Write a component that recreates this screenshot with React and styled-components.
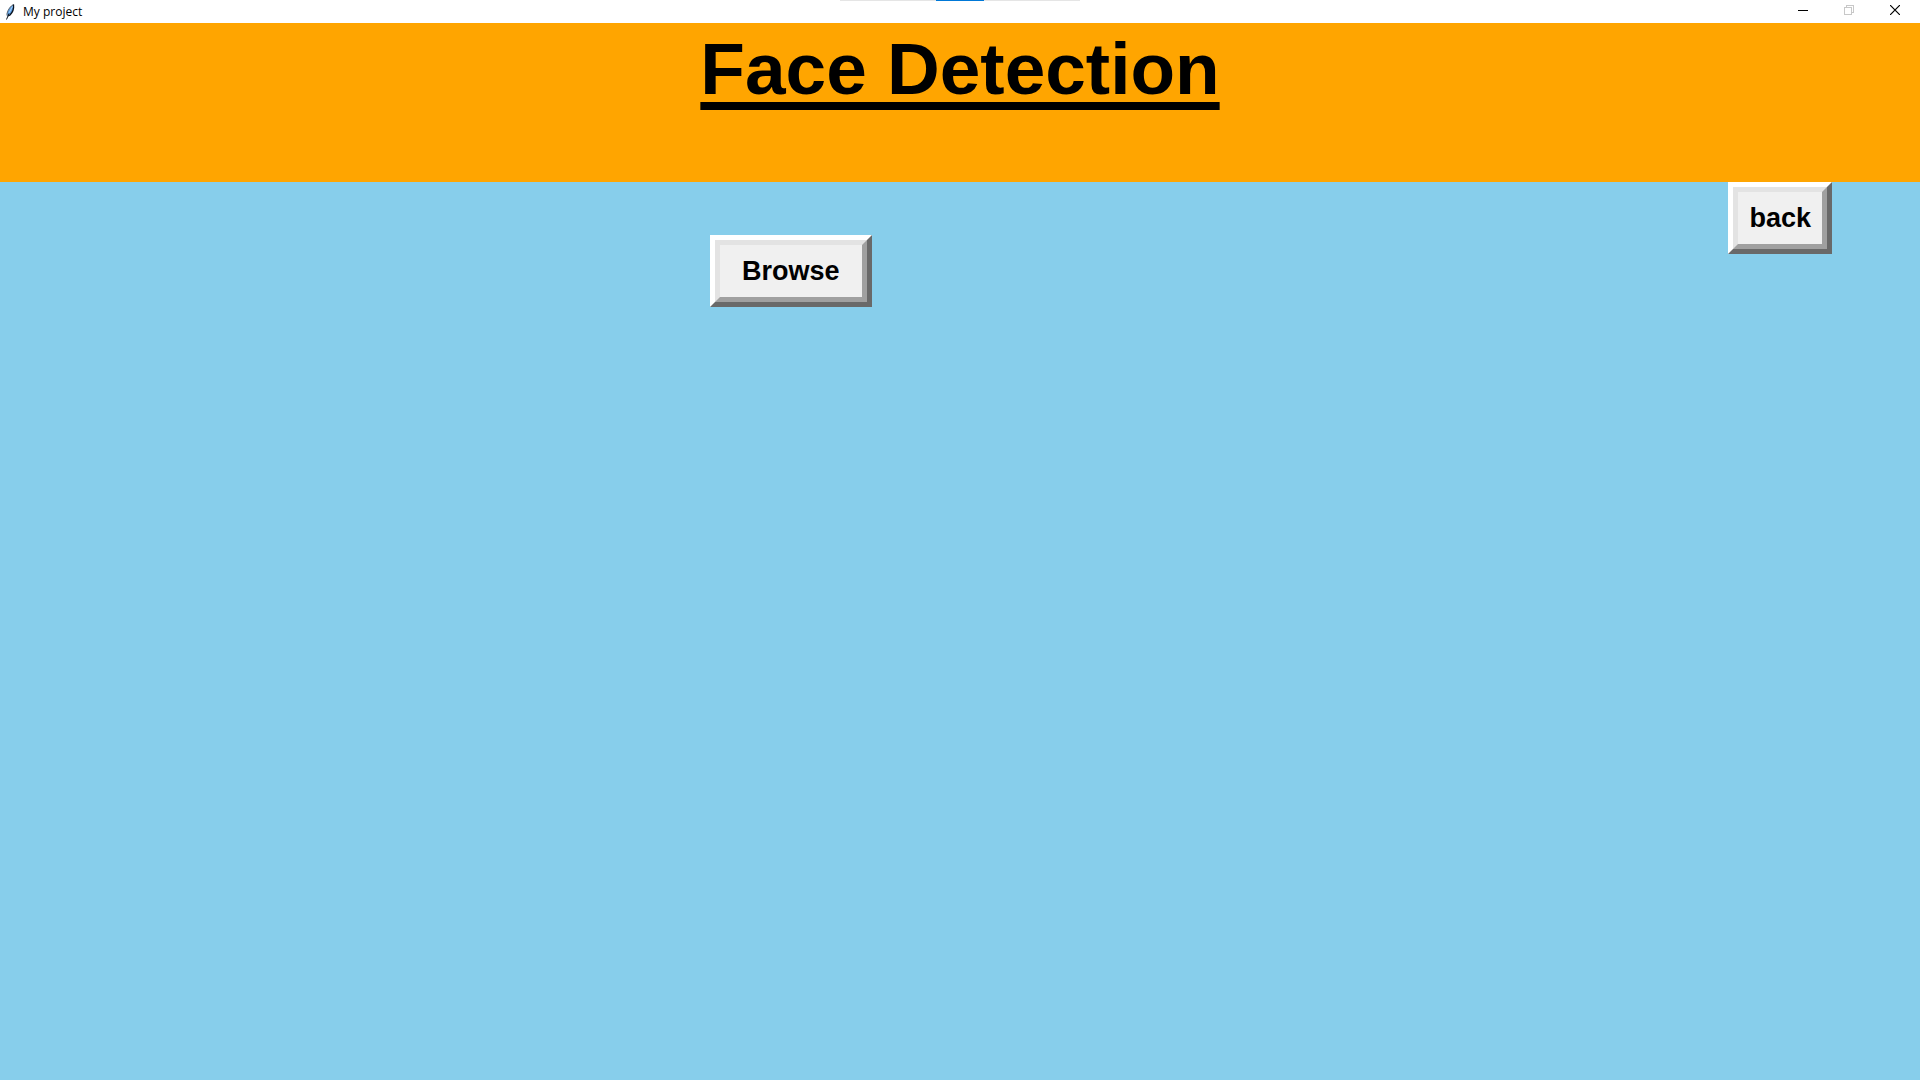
import React from "react";
import styled, { createGlobalStyle } from "styled-components";

const GlobalStyle = createGlobalStyle`
  *, *::before, *::after { box-sizing: border-box; }
  body { margin: 0; background: #87ceeb; }
`;

const Window = styled.div`
  position: relative;
  min-height: 100vh;
  display: flex;
  flex-direction: column;
  background: #87ceeb;
  font-family: "Liberation Sans", Arial, sans-serif;
  color: #000;
`;

const TitleBar = styled.div`
  height: 23px;
  display: flex;
  align-items: center;
  justify-content: space-between;
  background: #fff;
`;

const WindowTitle = styled.div`
  display: flex;
  align-items: center;
  gap: 4px;
  padding-left: 3px;
  font: 12px/22px "Open Sans", "Noto Sans", sans-serif;
`;

const WindowControls = styled.div`
  display: flex;
  padding-right: 2px;
`;

const ControlButton = styled.button`
  width: 46px;
  height: 23px;
  padding: 0 0 3px;
  border: 0;
  background: transparent;
  color: ${({ $muted }) => ($muted ? "#c8c8c8" : "#000")};
  display: flex;
  align-items: center;
  justify-content: center;
`;

const Progress = styled.div`
  position: absolute;
  top: 0;
  left: 50%;
  transform: translateX(-50%);
  width: 240px;
  height: 1px;
  background: #e5e5e5;
  display: flex;
  justify-content: center;
`;

const ProgressMark = styled.div`
  width: 48px;
  background: #0078d7;
`;

const Banner = styled.header`
  height: 159px;
  padding-top: 4px;
  background: #ffa500;
  text-align: center;
`;

const Heading = styled.h1`
  margin: 0;
  font-size: 73px;
  line-height: 84px;
  font-weight: 700;
  text-decoration: underline;
  text-decoration-thickness: 8px;
  text-underline-offset: 8px;
  text-decoration-skip-ink: none;
`;

const Workspace = styled.main`
  flex: 1;
  display: flex;
  justify-content: space-between;
  align-items: flex-start;
  padding: 0 88px 0 calc(50% - 250px);
`;

const BrowseArea = styled.div`
  padding-top: 53px;
`;

const BevelButton = styled.button`
  display: block;
  padding: 0;
  border: 5px solid;
  border-color: #fff #696969 #696969 #fff;
  background: #f0f0f0;
  color: #000;
  font: 700 27px/32px "Liberation Sans", Arial, sans-serif;
`;

const BevelFace = styled.span`
  display: block;
  padding: 10px ${({ $wide }) => ($wide ? "22px" : "11px")};
  border: 5px solid;
  border-color: #e3e3e3 #a0a0a0 #a0a0a0 #e3e3e3;
`;

function FeatherIcon() {
  return (
    <svg width="16" height="20" viewBox="0 0 16 20" aria-hidden="true">
      <path d="M10.500 2.500C7.500 4 5 7.500 4 11.500l.5 3 2-1c2.500-2 4.500-6 4.500-10z" fill="#5b9de0" />
      <path d="M10.500 2.500C7.500 4 5 7.500 4 11.500v2" stroke="#5a6470" fill="none" />
      <path d="M10.500 2.500c.5 4-1 8-3.500 10.500l-2 1" stroke="#0c1420" strokeWidth="1.300" fill="none" />
      <path d="M9.500 4.500 6 11" stroke="#a5d2ff" fill="none" />
      <path d="M6 11.500 3.500 17.500" stroke="#101820" fill="none" />
    </svg>
  );
}

export default function App() {
  return (
    <Window>
      <GlobalStyle />
      <TitleBar>
        <WindowTitle>
          <FeatherIcon />
          <span>My project</span>
        </WindowTitle>
        <WindowControls>
          <ControlButton aria-label="Minimize">
            <svg width="10" height="10" shapeRendering="crispEdges"><path d="M0 5.500h10" stroke="currentColor" /></svg>
          </ControlButton>
          <ControlButton $muted aria-label="Restore">
            <svg width="10" height="10" fill="none" stroke="currentColor" shapeRendering="crispEdges">
              <path d="M.5 2.500h7v7h-7zM2.500 2V.5h7v7H8" />
            </svg>
          </ControlButton>
          <ControlButton aria-label="Close">
            <svg width="10" height="10"><path d="M0 0 10 10M10 0 0 10" stroke="currentColor" strokeWidth="1.200" /></svg>
          </ControlButton>
        </WindowControls>
      </TitleBar>
      <Progress><ProgressMark /></Progress>
      <Banner>
        <Heading>Face Detection</Heading>
      </Banner>
      <Workspace>
        <BrowseArea>
          <BevelButton><BevelFace $wide>Browse</BevelFace></BevelButton>
        </BrowseArea>
        <BevelButton><BevelFace>back</BevelFace></BevelButton>
      </Workspace>
    </Window>
  );
}
